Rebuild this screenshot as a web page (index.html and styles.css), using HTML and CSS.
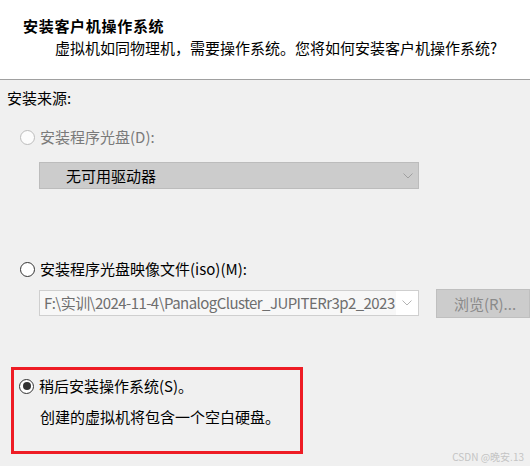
FILE: index.html
```html
<!DOCTYPE html>
<html lang="zh-CN">
<head>
<meta charset="utf-8">
<link rel="stylesheet" href="styles.css">
</head>
<body>
<div class="page">
  <header class="header">
    <div class="title">安装客户机操作系统</div>
    <div class="subtitle">虚拟机如同物理机，需要操作系统。您将如何安装客户机操作系统?</div>
  </header>
  <main class="main">
    <div class="label">安装来源:</div>

    <div class="radio-row row-disc">
      <span class="radio radio-disabled"></span>
      <span class="radio-text disabled">安装程序光盘(D):</span>
    </div>
    <div class="combo combo-disabled">
      <span class="combo-text">无可用驱动器</span>
      <svg class="chev" width="10" height="6" viewBox="0 0 10 6"><polyline points="0.5,0.5 5,5 9.5,0.5" fill="none" stroke="#a0a0a0" stroke-width="1"/></svg>
    </div>

    <div class="radio-row row-iso">
      <span class="radio"></span>
      <span class="radio-text">安装程序光盘映像文件(iso)(M):</span>
    </div>
    <div class="iso-row">
      <div class="combo combo-input">
        <span class="input-text">F:\实训\2024-11-4\PanalogCluster_JUPITERr3p2_2023</span>
        <svg class="chev" width="10" height="6" viewBox="0 0 10 6"><polyline points="0.5,0.5 5,5 9.5,0.5" fill="none" stroke="#b4b4b4" stroke-width="1"/></svg>
      </div>
      <div class="button">浏览(R)...</div>
    </div>

    <div class="later-box">
      <div class="radio-row">
        <span class="radio radio-checked"><span class="dot"></span></span>
        <span class="radio-text">稍后安装操作系统(S)。</span>
      </div>
      <div class="later-note">创建的虚拟机将包含一个空白硬盘。</div>
    </div>
  </main>
  <div class="watermark">CSDN @晚安.13</div>
</div>
</body>
</html>
```

FILE: styles.css
```css
html, body {
  margin: 0;
  padding: 0;
}
body {
  width: 530px;
  height: 466px;
  overflow: hidden;
  background: #f0f0f0;
  font-family: "Noto Sans CJK SC", "Microsoft YaHei", sans-serif;
  font-size: 15px;
  line-height: 22px;
  color: #000;
}
.page {
  position: relative;
  width: 530px;
  height: 466px;
}
.header {
  height: 80px;
  box-sizing: border-box;
  padding: 15px 0 0 23px;
  background: #fff;
  border-bottom: 1px solid #a0a0a0;
}
.title {
  font-weight: 700;
  letter-spacing: 0.7px;
}
.subtitle {
  padding-left: 32px;
}
.main {
  display: flex;
  flex-direction: column;
  align-items: flex-start;
  padding-left: 7px;
}
.label {
  margin-top: 7px;
}
.radio-row {
  display: flex;
  align-items: center;
  gap: 5px;
  margin-left: 13px;
}
.row-disc {
  margin-top: 17px;
}
.row-iso {
  margin-top: 69px;
}
.radio {
  width: 15px;
  height: 15px;
  box-sizing: border-box;
  border: 1px solid #333;
  border-radius: 50%;
  background: #fff;
  display: flex;
  align-items: center;
  justify-content: center;
  flex: none;
}
.radio-disabled {
  border-color: #bcbcbc;
  background: #fcfcfc;
}
.radio-checked .dot {
  width: 8px;
  height: 8px;
  border-radius: 50%;
  background: #333;
}
.disabled {
  color: #7a7a7a;
}
.combo {
  width: 380px;
  box-sizing: border-box;
  display: flex;
  align-items: center;
  justify-content: space-between;
  margin-left: 32px;
}
.combo-disabled {
  height: 27px;
  margin-top: 14px;
  background: #cccccc;
  border: 1px solid #bcbcbc;
  padding: 0 5px 0 26px;
}
.chev {
  flex: none;
}
.iso-row {
  display: flex;
  align-items: flex-start;
  margin-top: 9px;
  margin-left: 32px;
}
.combo-input {
  margin-left: 0;
  margin-top: 1px;
  height: 26px;
  background: #fff;
  border: 1px solid #cfcfcf;
  padding: 0 6px 0 0;
}
.input-text {
  width: 356px;
  height: 24px;
  line-height: 24px;
  padding-left: 4px;
  box-sizing: border-box;
  overflow: hidden;
  white-space: nowrap;
  letter-spacing: -0.55px;
  color: #6e6e6e;
  background: #f7f7f7;
}
.button {
  margin-left: 17px;
  width: 94px;
  height: 29px;
  box-sizing: border-box;
  background: #cccccc;
  border: 1px solid #bfbfbf;
  color: #8a8a8a;
  display: flex;
  align-items: center;
  justify-content: center;
  padding-left: 4px;
}
.later-box {
  margin-top: 49px;
  margin-left: 4px;
  width: 292px;
  height: 87px;
  box-sizing: border-box;
  border: 3px solid #ee1c25;
  padding-top: 5px;
}
.later-box .radio-row {
  margin-left: 5px;
}
.later-note {
  margin-top: 9px;
  padding-left: 26px;
}
.watermark {
  position: absolute;
  right: 6px;
  bottom: 3px;
  font-size: 10px;
  line-height: 12px;
  color: #c4c4c4;
  font-family: "Noto Sans CJK SC", sans-serif;
}
```
